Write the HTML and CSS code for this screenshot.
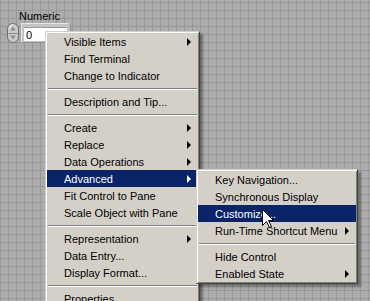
FILE: index.html
```html
<!DOCTYPE html>
<html lang="en">
<head>
  <meta charset="UTF-8">
  <title>Numeric shortcut menu</title>
  <link rel="stylesheet" href="styles.css">
</head>
<body>
  <div class="panel">
    <div class="numeric">
      <div class="num-label">Numeric</div>
      <div class="num-ctl">
        <svg class="spin" width="12" height="20" viewBox="0 0 12 20">
          <rect x="0.5" y="0.5" width="11" height="19" rx="5.5" fill="#c9c9c9" stroke="#6e6e6e"/>
          <path d="M1.5 10.5 H10.5" stroke="#8a8a8a"/>
          <path d="M6 3.5 L8.5 7.5 H3.5 Z" fill="#8c8c8c"/>
          <path d="M6 16.5 L8.5 12.5 H3.5 Z" fill="#8c8c8c"/>
          <path d="M2 6 Q2 2 6 1.5" stroke="#f2f2f2" fill="none"/>
        </svg>
        <div class="num-frame">
          <div class="num-field">0</div>
        </div>
      </div>
    </div>

    <div class="menu main-menu">
      <div class="item"><span>Visible Items</span><span class="arrow"></span></div>
      <div class="item"><span>Find Terminal</span></div>
      <div class="item"><span>Change to Indicator</span></div>
      <div class="sep"></div>
      <div class="item"><span>Description and Tip...</span></div>
      <div class="sep"></div>
      <div class="item"><span>Create</span><span class="arrow"></span></div>
      <div class="item"><span>Replace</span><span class="arrow"></span></div>
      <div class="item"><span>Data Operations</span><span class="arrow"></span></div>
      <div class="item active"><span>Advanced</span><span class="arrow"></span></div>
      <div class="item"><span>Fit Control to Pane</span></div>
      <div class="item"><span>Scale Object with Pane</span></div>
      <div class="sep"></div>
      <div class="item"><span>Representation</span><span class="arrow"></span></div>
      <div class="item"><span>Data Entry...</span></div>
      <div class="item"><span>Display Format...</span></div>
      <div class="sep"></div>
      <div class="item"><span>Properties</span></div>
    </div>

    <div class="menu sub-menu">
      <div class="item"><span>Key Navigation...</span></div>
      <div class="item"><span>Synchronous Display</span></div>
      <div class="item active"><span>Customize...</span></div>
      <div class="item"><span>Run-Time Shortcut Menu</span><span class="arrow"></span></div>
      <div class="sep"></div>
      <div class="item"><span>Hide Control</span></div>
      <div class="item"><span>Enabled State</span><span class="arrow"></span></div>
    </div>

    <svg class="cursor" width="13" height="20" viewBox="0 0 13 20">
      <path d="M0.5 0.5 L0.5 16.5 L4.5 12.5 L7.5 18.5 L9.5 17.5 L6.5 11.5 L11.5 11.5 Z" fill="#fff" stroke="#000" stroke-linejoin="miter"/>
    </svg>
  </div>
</body>
</html>
```

FILE: styles.css
```css
html, body { margin: 0; padding: 0; }
body { font-family: "Liberation Sans", Arial, sans-serif; font-size: 11px; color: #000; }

.panel {
  position: relative; width: 370px; height: 301px; overflow: hidden; box-sizing: border-box;
  padding: 10px 0 0 7px;
  background-color: #acacac;
  background-image: linear-gradient(90deg, #979797 1px, transparent 1px), linear-gradient(#979797 1px, transparent 1px);
  background-size: 8px 8px;
  background-position: 0 2px;
}

/* numeric control */
.numeric { display: flex; flex-direction: column; }
.num-label { margin-left: 12px; line-height: 13px; height: 13px; }
.num-ctl { display: flex; align-items: flex-start; gap: 2px; }
.spin { display: block; }
.num-frame {
  width: 50px; height: 20px; box-sizing: border-box; padding: 3px 3px 2px 2px;
  background: #c4c4c4; border: 1px solid #8d8d8d; border-top-color: #e6e6e6; border-left-color: #e6e6e6;
  border-radius: 0 4px 0 0;
}
.num-field { height: 14px; background: #fff; line-height: 14px; padding-left: 2px; border-top: 1px solid #9a9a9a; box-sizing: border-box; }

/* menus */
.menu {
  position: absolute; box-sizing: border-box; padding: 1px;
  background: #d4d0c8;
  border: 1px solid; border-color: #d4d0c8 #404040 #404040 #d4d0c8;
  box-shadow: inset 1px 1px 0 #fff, inset -1px -1px 0 #808080, 3px 3px 2px rgba(0, 0, 0, 0.35);
}
.main-menu { left: 45px; top: 31px; width: 155px; }
.sub-menu { left: 196px; top: 169px; width: 162px; }

.item {
  display: flex; align-items: center; justify-content: space-between;
  height: 17px; padding: 0 7px 0 17px; white-space: nowrap;
}
.item.active { background: #0a246a; color: #fff; }
.arrow { width: 0; height: 0; border-left: 4px solid #000; border-top: 4px solid transparent; border-bottom: 4px solid transparent; }
.item.active .arrow { border-left-color: #fff; }

.sep { height: 9px; box-sizing: border-box; padding: 4px 1px 0; }
.sep::before { content: ""; display: block; border-top: 1px solid #808080; border-bottom: 1px solid #fff; }

.cursor { position: absolute; left: 262px; top: 209px; }
```
